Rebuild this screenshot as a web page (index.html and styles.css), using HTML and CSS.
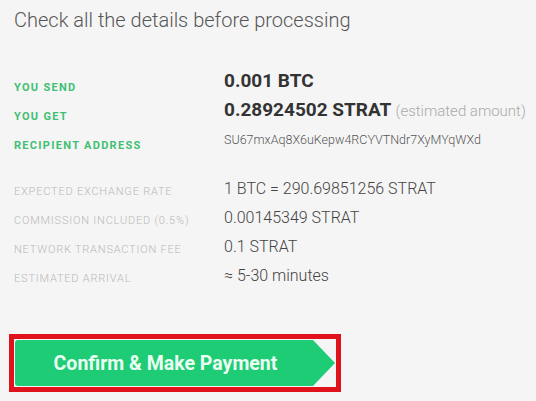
FILE: index.html
```html
<!DOCTYPE html>
<html lang="en">
<head>
  <meta charset="UTF-8" />
  <title>Confirm exchange</title>
  <link rel="stylesheet" href="styles.css">
</head>
<body>
  <h2 class="title">Check all the details before processing</h2>

  <div class="details main">
    <div class="label">You send</div>
    <div class="value big">0.001 BTC</div>
    <div class="label">You get</div>
    <div class="value big">0.28924502 STRAT <span class="note">(estimated amount)</span></div>
    <div class="label">Recipient address</div>
    <div class="value address">SU67mxAq8X6uKepw4RCYVTNdr7XyMYqWXd</div>
  </div>

  <div class="details extra">
    <div class="label">Expected exchange rate</div>
    <div class="value">1 BTC = 290.69851256 STRAT</div>
    <div class="label">Commission included (0.5%)</div>
    <div class="value">0.00145349 STRAT</div>
    <div class="label">Network transaction fee</div>
    <div class="value">0.1 STRAT</div>
    <div class="label">Estimated arrival</div>
    <div class="value">&asymp; 5-30 minutes</div>
  </div>

  <div class="highlight">
    <button class="confirm-btn">Confirm &amp; Make Payment</button>
  </div>
</body>
</html>
```

FILE: styles.css
```css
body {
  margin: 0;
  padding: 0 0 0 14px;
  background-color: #f5f5f5;
  font-family: Roboto, 'Liberation Sans', sans-serif;
  color: #333;
}

.title {
  margin: 0;
  padding-top: 8px;
  font-size: 20px;
  line-height: 24px;
  font-weight: 300;
  color: #555;
}

.details {
  display: grid;
  grid-template-columns: 210px 1fr;
  grid-auto-rows: 29px;
  align-items: center;
}

.main {
  margin-top: 34px;
}

.extra {
  margin-top: 21px;
}

.label {
  font-size: 11px;
  text-transform: uppercase;
}

.main .label {
  color: #3fbf74;
  font-weight: 700;
  letter-spacing: 1.3px;
  padding-top: 13px;
}

.extra .label {
  color: #b9b9b9;
  font-weight: 300;
  letter-spacing: 0.8px;
  padding-top: 5px;
}

.value {
  font-size: 16px;
  font-weight: 300;
  color: #444;
}

.value.big {
  font-size: 19px;
  font-weight: 700;
  color: #333;
}

.note {
  font-size: 15px;
  font-weight: 300;
  color: #aaa;
}

.value.address {
  font-size: 12.5px;
  color: #555;
  padding-top: 2px;
}

.highlight {
  display: inline-block;
  margin: 44px 0 0 -5px;
  border: 5px solid #e0121b;
  padding: 1px;
}

.confirm-btn {
  display: block;
  width: 320px;
  height: 46px;
  padding: 0 19px 0 0;
  border: none;
  border-radius: 3px 0 0 3px;
  background-color: #1fcc76;
  color: #eafff2;
  font-family: Roboto, 'Liberation Sans', sans-serif;
  font-size: 19.5px;
  font-weight: 700;
  cursor: pointer;
  clip-path: polygon(0 0, 298px 0, 100% 50%, 298px 100%, 0 100%);
}
```
